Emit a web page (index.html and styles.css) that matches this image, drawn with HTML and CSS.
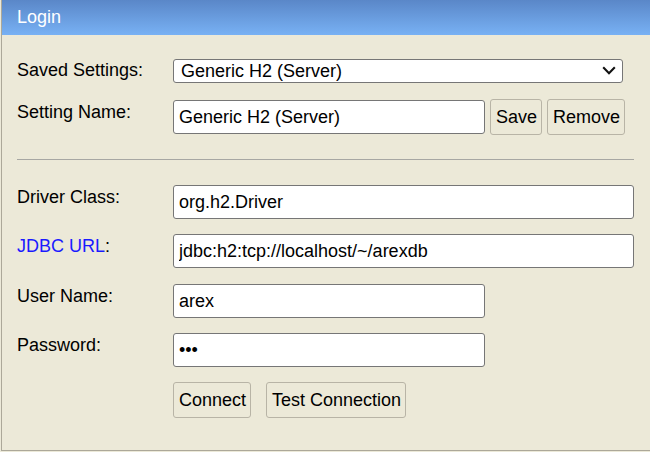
FILE: index.html
```html
<!DOCTYPE html>
<html>
<head>
<meta charset="utf-8">
<title>Login</title>
<link rel="stylesheet" href="styles.css">
</head>
<body>
<div class="panel">
  <div class="header">Login</div>
  <form class="form">
    <div class="row row-select">
      <label class="lbl">Saved Settings:</label>
      <div class="selwrap">
        <select class="sel"><option>Generic H2 (Server)</option></select>
        <svg class="chev" viewBox="0 0 14 9" width="14" height="9" aria-hidden="true">
          <path d="M1.2 1.3 L7 7.2 L12.8 1.3" fill="none" stroke="#111" stroke-width="2.1"/>
        </svg>
      </div>
    </div>
    <div class="row row-name">
      <label class="lbl">Setting Name:</label>
      <div class="group">
        <input class="inp short" type="text" value="Generic H2 (Server)">
        <button type="button" class="btn">Save</button>
        <button type="button" class="btn">Remove</button>
      </div>
    </div>
    <hr class="sep">
    <div class="row">
      <label class="lbl">Driver Class:</label>
      <input class="inp wide" type="text" value="org.h2.Driver">
    </div>
    <div class="row gap16">
      <label class="lbl"><span class="link">JDBC URL</span>:</label>
      <input class="inp wide" type="text" value="jdbc:h2:tcp://localhost/~/arexdb">
    </div>
    <div class="row">
      <label class="lbl">User Name:</label>
      <input class="inp short" type="text" value="arex">
    </div>
    <div class="row">
      <label class="lbl">Password:</label>
      <input class="inp short" type="password" value="abc">
    </div>
    <div class="row row-actions">
      <span class="lbl"></span>
      <div class="actions">
        <button type="button" class="btn">Connect</button>
        <button type="button" class="btn">Test Connection</button>
      </div>
    </div>
  </form>
</div>
</body>
</html>
```
FILE: styles.css
```css
html, body {
  margin: 0;
  padding: 0;
  background: #ece9d8;
}

body {
  font-family: "Liberation Sans", Arial, sans-serif;
  font-size: 18px;
  color: #000;
}

.panel {
  margin-left: 1px;
  height: 450px;
  border-left: 1px solid #aca899;
  border-bottom: 1px solid #aca899;
  background: #ece9d8;
}

.header {
  height: 35px;
  line-height: 35px;
  padding-left: 15px;
  color: #fff;
  background: linear-gradient(#5a87c8, #78b1f4);
}

.form {
  padding: 24px 0 0 15px;
  width: 617px;
}

.row {
  display: flex;
  align-items: flex-start;
  margin-bottom: 15px;
}

.row.gap16 {
  margin-bottom: 16px;
}

.lbl {
  width: 156px;
  flex: none;
  padding-top: 2px;
  line-height: 21px;
}

.row-select {
  margin-bottom: 16px;
}

.row-select .lbl {
  padding-top: 1px;
}

.link {
  color: #1a1aff;
}

.selwrap {
  position: relative;
  width: 450px;
  height: 24px;
}

.sel {
  -webkit-appearance: none;
  appearance: none;
  display: block;
  width: 450px;
  height: 24px;
  box-sizing: border-box;
  border: 1px solid #767676;
  border-radius: 3px;
  background: #fff;
  font: inherit;
  color: #000;
  padding: 0 30px 0 7px;
  margin: 0;
}

.chev {
  position: absolute;
  right: 7px;
  top: 7px;
  pointer-events: none;
}

.inp {
  box-sizing: border-box;
  height: 34px;
  border: 1px solid #767676;
  border-radius: 3px;
  background: #fff;
  font: inherit;
  color: #000;
  padding: 0 5px;
  margin: 0;
}

.inp.wide {
  width: 461px;
}

.inp.short {
  width: 312px;
}

.group {
  display: flex;
  align-items: flex-start;
  gap: 5px;
}

.group .inp {
  margin-top: 1px;
}

.row-name {
  margin-bottom: 0;
}

.row-name .lbl {
  padding-top: 3px;
}

.btn {
  box-sizing: border-box;
  height: 36px;
  padding: 0 4px 0 5px;
  margin: 0;
  border: 1px solid #b8b4a6;
  border-radius: 3px;
  background: #ece9d8;
  font: inherit;
  color: #000;
}

.sep {
  margin: 24px 0 25px 0;
  border: 0;
  border-top: 1px solid #a7a7a3;
  height: 0;
}

.actions {
  display: flex;
  gap: 15px;
}
```
